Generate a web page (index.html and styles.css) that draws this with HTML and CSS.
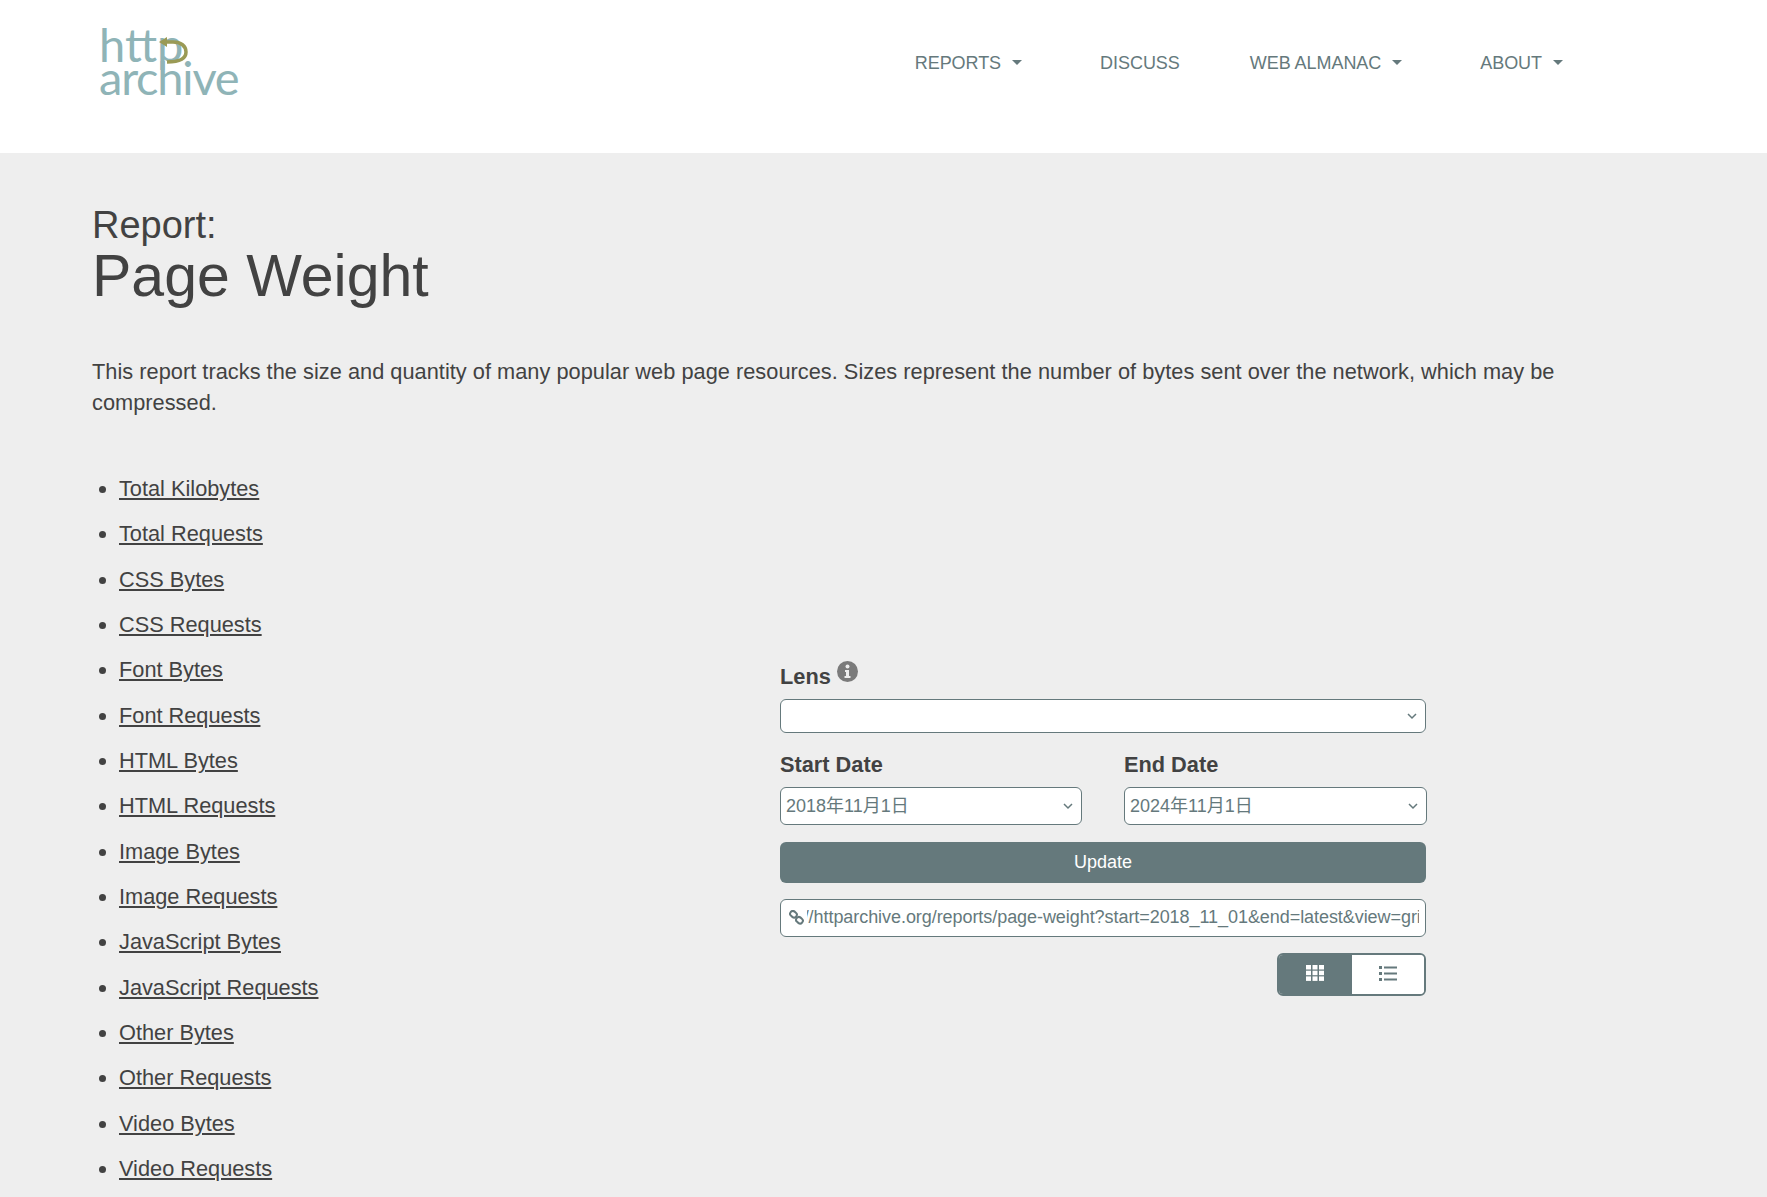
FILE: index.html
```html
<!DOCTYPE html>
<html lang="en">
<head>
<meta charset="utf-8">
<title>Report: Page Weight</title>
<link rel="stylesheet" href="styles.css">
</head>
<body>
<header class="site-header">
  <a class="logo" href="#">
    <span class="logo-http">http</span>
    <svg class="logo-arrow" width="32" height="34" viewBox="0 0 32 34"><path d="M7 9H15C23 9 28 13 28 19C28 25 22 29 9 29" fill="none" stroke="#9a9a55" stroke-width="3.500"/><path d="M9 4V14L1 9Z" fill="#9a9a55"/></svg>
    <span class="logo-archive">archive</span>
  </a>
  <nav class="main-nav">
    <a class="nav-link" href="#">REPORTS<i class="caret"></i></a>
    <a class="nav-link" href="#">DISCUSS</a>
    <a class="nav-link" href="#">WEB ALMANAC<i class="caret"></i></a>
    <a class="nav-link" href="#">ABOUT<i class="caret"></i></a>
  </nav>
</header>
<main class="content">
  <h1 class="title"><span class="title-small">Report:</span><span class="title-big">Page Weight</span></h1>
  <p class="intro">This report tracks the size and quantity of many popular web page resources. Sizes represent the number of bytes sent over the network, which may be compressed.</p>
  <div class="report-row">
    <ul class="metrics">
      <li><a href="#">Total Kilobytes</a></li>
      <li><a href="#">Total Requests</a></li>
      <li><a href="#">CSS Bytes</a></li>
      <li><a href="#">CSS Requests</a></li>
      <li><a href="#">Font Bytes</a></li>
      <li><a href="#">Font Requests</a></li>
      <li><a href="#">HTML Bytes</a></li>
      <li><a href="#">HTML Requests</a></li>
      <li><a href="#">Image Bytes</a></li>
      <li><a href="#">Image Requests</a></li>
      <li><a href="#">JavaScript Bytes</a></li>
      <li><a href="#">JavaScript Requests</a></li>
      <li><a href="#">Other Bytes</a></li>
      <li><a href="#">Other Requests</a></li>
      <li><a href="#">Video Bytes</a></li>
      <li><a href="#">Video Requests</a></li>
    </ul>
    <form class="filters">
      <div class="lens-label"><label class="lens-text" for="lens">Lens</label>
        <svg class="info" width="21" height="21" viewBox="0 0 21 21"><circle cx="10.500" cy="10.500" r="10.500" fill="#7b7b7b"/><circle cx="10.500" cy="5.500" r="2" fill="#eee"/><path d="M8 9h4v6h1.500v2h-6v-2H9v-4H8z" fill="#eee"/></svg>
      </div>
      <div class="select-wrap lens-select">
        <select id="lens"><option></option></select>
        <svg class="chev" width="10" height="7" viewBox="0 0 10 7"><path d="M1 1l4 4 4-4" fill="none" stroke="#65797c" stroke-width="1.500"/></svg>
      </div>
      <div class="date-row">
        <div class="date-col">
          <label for="start">Start Date</label>
          <div class="select-wrap date-select">
            <select id="start"><option>2018年11月1日</option></select>
            <svg class="chev" width="10" height="7" viewBox="0 0 10 7"><path d="M1 1l4 4 4-4" fill="none" stroke="#65797c" stroke-width="1.500"/></svg>
          </div>
        </div>
        <div class="date-col">
          <label for="end">End Date</label>
          <div class="select-wrap date-select">
            <select id="end"><option>2024年11月1日</option></select>
            <svg class="chev" width="10" height="7" viewBox="0 0 10 7"><path d="M1 1l4 4 4-4" fill="none" stroke="#65797c" stroke-width="1.500"/></svg>
          </div>
        </div>
      </div>
      <button class="update" type="button">Update</button>
      <div class="permalink">
        <svg class="link-icon" width="15" height="15" viewBox="0 0 15 15"><g fill="none" stroke="#65797c" stroke-width="2"><rect x="1" y="1.500" width="7" height="5.500" rx="2.700" transform="rotate(40 4.500 4.200)"/><rect x="7" y="7.500" width="7" height="5.500" rx="2.700" transform="rotate(40 10.500 10.200)"/></g></svg>
        <div class="url-clip"><span class="url">https://httparchive.org/reports/page-weight?start=2018_11_01&amp;end=latest&amp;view=grid</span></div>
      </div>
      <div class="view-toggle">
        <button class="view-btn active" type="button" aria-label="Grid view">
          <svg width="18" height="16" viewBox="0 0 18 16" fill="#fff"><rect width="5" height="4.500"/><rect x="6.500" width="5" height="4.500"/><rect x="13" width="5" height="4.500"/><rect y="5.700" width="5" height="4.500"/><rect x="6.500" y="5.700" width="5" height="4.500"/><rect x="13" y="5.700" width="5" height="4.500"/><rect y="11.400" width="5" height="4.500"/><rect x="6.500" y="11.400" width="5" height="4.500"/><rect x="13" y="11.400" width="5" height="4.500"/></svg>
        </button>
        <button class="view-btn" type="button" aria-label="List view">
          <svg width="18" height="15" viewBox="0 0 18 15" fill="#65797c"><rect width="3" height="3"/><rect x="5" y=".5" width="13" height="2"/><rect y="6" width="3" height="3"/><rect x="5" y="6.500" width="13" height="2"/><rect y="12" width="3" height="3"/><rect x="5" y="12.500" width="13" height="2"/></svg>
        </button>
      </div>
    </form>
  </div>
</main>
</body>
</html>
```
FILE: styles.css
```css
* { box-sizing: border-box; }
html, body { margin: 0; height: 100%; }
body {
  background: #eee;
  color: #424242;
  font-family: "Liberation Sans", "Noto Sans CJK JP", sans-serif;
  font-size: 21.76px;
  overflow: hidden;
}
a { color: inherit; }

.site-header {
  background: #fff;
  height: 153px;
  display: flex;
  align-items: flex-start;
  justify-content: space-between;
  padding: 0 196px 0 99px;
}
.logo {
  position: relative;
  display: block;
  width: 142px;
  height: 100px;
  margin-top: 28px;
  color: #8fb4b7;
  text-decoration: none;
  font-family: Lato, sans-serif;
  font-weight: 400;
  font-size: 47px;
  line-height: 33px;
}
.logo-http, .logo-archive { display: block; white-space: nowrap; }
.logo-http { letter-spacing: 0; }
.logo-archive { letter-spacing: -1.200px; }
.logo-arrow { position: absolute; left: 59px; top: 5px; }

.main-nav {
  display: flex;
  gap: 70px;
  margin-top: 52px;
  font-size: 18px;
  line-height: 22px;
  color: #65797c;
  letter-spacing: -0.05px;
}
.nav-link { text-decoration: none; white-space: nowrap; }
.caret {
  display: inline-block;
  margin: 0 8px 0 11px;
  vertical-align: 4px;
  border-top: 5px solid #65797c;
  border-left: 5.500px solid transparent;
  border-right: 5.500px solid transparent;
}

.content { padding: 52px 92px 0; }
.title { margin: 0; font-weight: 400; }
.title-small { display: block; font-size: 38px; line-height: 40px; }
.title-big { display: block; font-size: 59px; line-height: 62px; }
.intro {
  margin: 49px 0 0;
  width: 1490px;
  line-height: 31px;
  letter-spacing: 0.03px;
}
.report-row {
  display: grid;
  grid-template-columns: 688px 646px;
  align-items: center;
  margin-top: 48px;
}
.metrics { margin: 0; padding: 0 0 0 27px; }
.metrics li { height: 45.35px; line-height: 45.35px; }

.filters { display: flex; flex-direction: column; padding-bottom: 2px; }
.filters label { font-weight: 700; font-size: 21.76px; line-height: 26px; }
.lens-label { display: flex; align-items: flex-start; gap: 6px; height: 39px; padding-top: 2px; }
.lens-text { margin-top: 2px; }
.info { margin-top: -1px; }
.select-wrap { position: relative; }
.select-wrap select {
  display: block;
  width: 100%;
  appearance: none;
  background: #fff;
  border: 1px solid #65797c;
  border-radius: 6px;
  color: #65797c;
  font: inherit;
  font-size: 18px;
  padding: 0 20px 0 5px;
}
.chev { position: absolute; right: 9px; top: 50%; margin-top: -3px; pointer-events: none; }
.lens-select select { height: 34px; }
.date-row { display: grid; grid-template-columns: 302px 303px; column-gap: 42px; margin-top: 19px; }
.date-col label { display: block; height: 35px; }
.date-select select { height: 38px; }
.update {
  margin-top: 17px;
  height: 41px;
  background: #65797c;
  color: #fff;
  border: 0;
  border-radius: 6px;
  font: inherit;
  font-size: 18px;
}
.permalink {
  display: flex;
  align-items: center;
  gap: 3px;
  margin-top: 16px;
  height: 38px;
  padding: 0 6px 0 8px;
  background: #fff;
  border: 1px solid #65797c;
  border-radius: 6px;
  color: #65797c;
  font-size: 18px;
}
.link-icon { flex: none; }
.url-clip { overflow: hidden; flex: 1; white-space: nowrap; }
.url { display: block; margin-left: -47px; letter-spacing: -0.06px; }
.view-toggle {
  align-self: flex-end;
  display: flex;
  margin-top: 16px;
  width: 149px;
  height: 43px;
  border: 2px solid #65797c;
  border-radius: 6px;
  overflow: hidden;
}
.view-btn {
  flex: 1;
  display: flex;
  align-items: center;
  justify-content: center;
  padding: 0 0 2px;
  border: 0;
  background: #fff;
}
.view-btn.active { background: #65797c; }
```
